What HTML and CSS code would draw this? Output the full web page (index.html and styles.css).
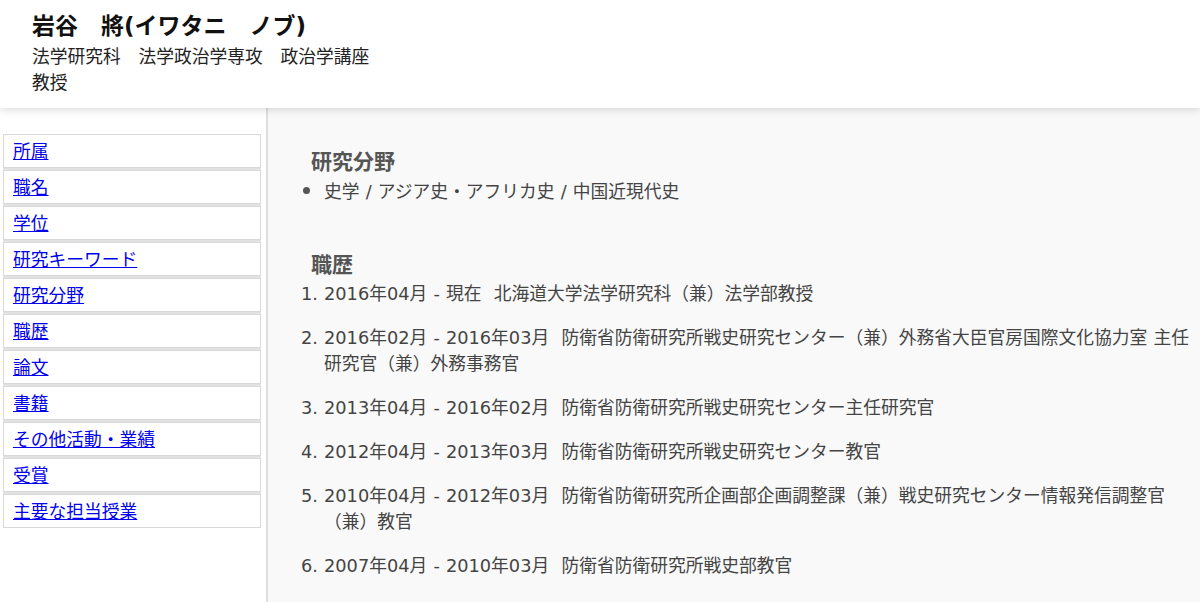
FILE: index.html
```html
<!DOCTYPE html>
<html lang="ja">
<head>
    <meta charset="UTF-8">
    <meta name="viewport" content="width=device-width, initial-scale=1.0">
    <title>岩谷 將</title>
    <link rel="stylesheet" href="styles.css">
</head>
<body>
    <div class="header">
        <h1 class="name">岩谷　將(イワタニ　ノブ)</h1>
        <p class="dept">法学研究科　法学政治学専攻　政治学講座</p>
        <p class="dept">教授</p>
    </div>

    <div class="page">
        <!-- 左側のメニュー -->
        <div class="side">
            <ul class="menu">
                <li><a href="#">所属</a></li>
                <li><a href="#">職名</a></li>
                <li><a href="#">学位</a></li>
                <li><a href="#">研究キーワード</a></li>
                <li><a href="#">研究分野</a></li>
                <li><a href="#">職歴</a></li>
                <li><a href="#">論文</a></li>
                <li><a href="#">書籍</a></li>
                <li><a href="#">その他活動・業績</a></li>
                <li><a href="#">受賞</a></li>
                <li><a href="#">主要な担当授業</a></li>
            </ul>
        </div>

        <!-- 本文 -->
        <div class="main">
            <div class="block">
                <h2>研究分野</h2>
                <ul class="fields">
                    <li>史学 / アジア史・アフリカ史 / 中国近現代史</li>
                </ul>
            </div>

            <div class="block">
                <h2>職歴</h2>
                <ol class="career">
                    <li>2016年04月 - 現在&nbsp;&nbsp;北海道大学法学研究科（兼）法学部教授</li>
                    <li>2016年02月 - 2016年03月&nbsp;&nbsp;防衛省防衛研究所戦史研究センター（兼）外務省大臣官房国際文化協力室 主任研究官（兼）外務事務官</li>
                    <li>2013年04月 - 2016年02月&nbsp;&nbsp;防衛省防衛研究所戦史研究センター主任研究官</li>
                    <li>2012年04月 - 2013年03月&nbsp;&nbsp;防衛省防衛研究所戦史研究センター教官</li>
                    <li>2010年04月 - 2012年03月&nbsp;&nbsp;防衛省防衛研究所企画部企画調整課（兼）戦史研究センター情報発信調整官（兼）教官</li>
                    <li>2007年04月 - 2010年03月&nbsp;&nbsp;防衛省防衛研究所戦史部教官</li>
                </ol>
            </div>
        </div>
    </div>
</body>
</html>
```

FILE: styles.css
```css
* {
    margin: 0px;
    padding: 0px;
    box-sizing: border-box;
}

body {
    font-family: "DejaVu Sans", "Noto Sans CJK JP", sans-serif;
    font-size: 17.75px;
    word-spacing: 0.5px;
    color: #333;
    background-color: #f9f9f9;
}

/* Шапка с именем */
.header {
    position: relative;
    z-index: 2;
    background-color: white;
    height: 108px;
    padding: 12px 32px 10px;
    box-shadow: 0px 2px 8px rgba(0, 0, 0, 0.14);
}

.name {
    font-size: 23px;
    line-height: 28px;
    margin-bottom: 4px;
    font-weight: bold;
    color: #111;
}

.dept {
    line-height: 26px;
    color: #222;
}

.page {
    display: flex;
    min-height: 494px;
}

/* Боковое меню */
.side {
    width: 268px;
    flex-shrink: 0;
    background-color: white;
    border-right: 2px solid #dedede;
    padding: 26px 5px 0 3px;
}

.menu {
    list-style: none;
    background-color: #e2e2e2;
}

.menu li {
    background-color: white;
    border: 1px solid #d9d9d9;
    padding: 4px 9px 2px;
    line-height: 26px;
    margin-bottom: 2px;
}

.menu li:last-child {
    margin-bottom: 0;
}

.menu a {
    color: #0000ee;
}

/* Основной блок */
.main {
    flex: 1;
    padding: 41px 8px 0 43px;
    color: #444;
}

.block {
    margin-bottom: 47px;
}

.block h2 {
    font-size: 21px;
    line-height: 26px;
    font-weight: bold;
    color: #555;
}

.fields {
    margin-top: 3px;
    padding-left: 13px;
    line-height: 26px;
}

.fields li::marker {
    font-family: "Noto Sans", sans-serif;
    font-size: 20px;
    color: #555;
}

.career {
    margin-top: 3px;
    padding-left: 13px;
    line-height: 26px;
}

.career li {
    margin-bottom: 18px;
}
```
